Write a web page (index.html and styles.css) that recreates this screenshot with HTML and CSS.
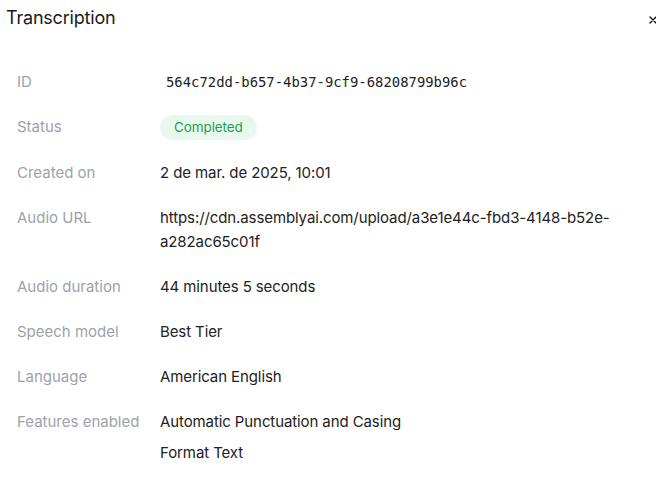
FILE: index.html
```html
<!DOCTYPE html>
<html>
<head>
<meta charset="utf-8">
<link rel="stylesheet" href="styles.css">
</head>
<body>
<div class="dialog">
  <header class="header">
    <h1 class="title">Transcription</h1>
    <button class="close" aria-label="Close">
      <svg width="8" height="8" viewBox="0 0 8 8"><path d="M1 1L7 7M7 1L1 7" stroke="#111" stroke-width="1.4" stroke-linecap="round"/></svg>
    </button>
  </header>
  <dl class="details">
    <dt class="label">ID</dt>
    <dd class="value mono">564c72dd-b657-4b37-9cf9-68208799b96c</dd>
    <dt class="label">Status</dt>
    <dd class="value"><span class="badge">Completed</span></dd>
    <dt class="label">Created on</dt>
    <dd class="value">2 de mar. de 2025, 10:01</dd>
    <dt class="label">Audio URL</dt>
    <dd class="value url">https://cdn.assemblyai.com/upload/a3e1e44c-fbd3-4148-b52e-a282ac65c01f</dd>
    <dt class="label">Audio duration</dt>
    <dd class="value">44 minutes 5 seconds</dd>
    <dt class="label">Speech model</dt>
    <dd class="value">Best Tier</dd>
    <dt class="label">Language</dt>
    <dd class="value">American English</dd>
    <dt class="label">Features enabled</dt>
    <dd class="value features">
      <span>Automatic Punctuation and Casing</span>
      <span>Format Text</span>
    </dd>
  </dl>
</div>
</body>
</html>
```
FILE: styles.css
```css
html, body {
  margin: 0;
  padding: 0;
  background: #fff;
  overflow: hidden;
}
.dialog {
  width: 656px;
  font-family: Inter, "Noto Sans", sans-serif;
  color: #1f1f1f;
}
.header {
  display: flex;
  align-items: center;
  justify-content: space-between;
  padding: 6px 0 0 6px;
  height: 24px;
}
.title {
  margin: 0;
  font-size: 18px;
  font-weight: 400;
  line-height: 24px;
  color: #1a1a1a;
  letter-spacing: -0.2px;
}
.close {
  border: 0;
  background: none;
  padding: 0;
  margin-right: -1px;
  margin-top: 3px;
  width: 8px;
  height: 8px;
  display: flex;
}
.details {
  margin: 40px 0 0 0;
  padding: 0 17px;
  display: grid;
  grid-template-columns: 143px 1fr;
  row-gap: 21px;
  font-size: 15px;
  line-height: 24px;
}
.label {
  margin: 0;
  color: #9ca2ab;
}
.value {
  margin: 0;
  color: #222;
  letter-spacing: -0.1px;
}
.mono {
  font-family: "DejaVu Sans Mono", monospace;
  font-size: 13.9px;
  letter-spacing: 0;
  padding-left: 6px;
}
.badge {
  display: inline-block;
  background: #e9f8ef;
  color: #1f9d55;
  font-size: 13.5px;
  line-height: 25px;
  padding: 0 14px;
  border-radius: 13px;
}
.features {
  display: flex;
  flex-direction: column;
  gap: 7px;
}
```
